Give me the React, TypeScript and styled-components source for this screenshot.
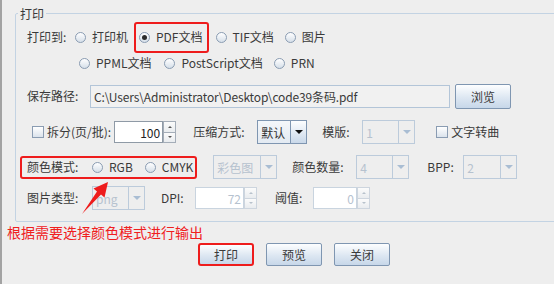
import * as React from 'react'
import styled, { createGlobalStyle, css } from 'styled-components'

const GlobalStyle = createGlobalStyle`
  html, body {
    margin: 0;
    padding: 0;
    background: #eeeeee;
    overflow: hidden;
  }
  body {
    font-family: "Noto Sans CJK SC", "Microsoft YaHei", sans-serif;
    font-size: 12px;
    color: #3a3a3a;
  }
`

const Page = styled.div`
  position: relative;
  width: 554px;
  height: 284px;
  box-sizing: border-box;
  border-left: 2px solid #a3a3a3;
  padding-top: 5px;
  overflow: hidden;
`

const Group = styled.fieldset`
  margin: 0 -20px 0 13px;
  padding: 2px 0 10px 11px;
  border: 1px solid #c3d3e3;
  border-radius: 2px;
  min-width: 0;
`

const Legend = styled.legend`
  margin-left: -9px;
  padding: 0 2px;
  line-height: 17px;
  font-size: 12px;
`

type RowProps = { $h: number; $mt?: number }
const Row = styled.div<RowProps>`
  display: flex;
  align-items: center;
  height: ${p => p.$h}px;
  margin-top: ${p => p.$mt ?? 0}px;
`

const Label = styled.span<{ $w?: number; $ml?: number }>`
  display: inline-block;
  white-space: nowrap;
  line-height: 16px;
  flex-shrink: 0;
  ${p => p.$w && `width: ${p.$w}px;`}
  margin-left: ${p => p.$ml ?? 0}px;
`

const Option = styled.label<{ $mr?: number; $ml?: number }>`
  display: inline-flex;
  align-items: center;
  gap: 6px;
  line-height: 16px;
  white-space: nowrap;
  margin-right: ${p => p.$mr ?? 0}px;
  margin-left: ${p => p.$ml ?? 0}px;
`

const RadioDot = styled.span<{ $checked?: boolean }>`
  position: relative;
  width: 11px;
  height: 11px;
  box-sizing: border-box;
  border-radius: 50%;
  border: 1px solid #8a9cb2;
  background: linear-gradient(#ffffff, #d6dfe9);
  flex-shrink: 0;
  ${p =>
    p.$checked &&
    css`
      &::after {
        content: '';
        position: absolute;
        left: 2px;
        top: 2px;
        width: 5px;
        height: 5px;
        border-radius: 50%;
        background: #2b2b2b;
      }
    `}
`

const CheckBox = styled.span`
  width: 12px;
  height: 12px;
  box-sizing: border-box;
  border: 1px solid #8a9cb2;
  background: linear-gradient(#ffffff, #dbe3ec);
  flex-shrink: 0;
`

const CheckOption = styled.label<{ $ml?: number }>`
  display: inline-flex;
  align-items: center;
  gap: 3px;
  white-space: nowrap;
  line-height: 16px;
  margin-left: ${p => p.$ml ?? 0}px;
`

const Highlight = styled.div<{ $inset: string }>`
  position: relative;
  display: flex;
  align-items: center;
  &::after {
    content: '';
    position: absolute;
    inset: ${p => p.$inset};
    border: 2px solid #ee1c1c;
    border-radius: 3px;
    pointer-events: none;
  }
`

const PathField = styled.div`
  width: 360px;
  height: 23px;
  box-sizing: border-box;
  border: 1px solid #b3c5d8;
  background: #f1f1f1;
  padding-left: 3px;
  display: flex;
  align-items: center;
  white-space: nowrap;
  overflow: hidden;
  letter-spacing: -0.15px;
`

const Button = styled.div<{ $w?: number; $h?: number; $ml?: number; $hl?: boolean }>`
  width: ${p => p.$w ?? 56}px;
  height: ${p => p.$h ?? 23}px;
  margin-left: ${p => p.$ml ?? 0}px;
  box-sizing: border-box;
  display: flex;
  align-items: center;
  justify-content: center;
  border: 1px solid #7f96b1;
  border-radius: 2px;
  background: linear-gradient(#fdfeff, #dde7f2 55%, #c7d7e9);
  flex-shrink: 0;
  ${p =>
    p.$hl &&
    css`
      border: 2px solid #ee1c1c;
      border-radius: 3px;
    `}
`

const Combo = styled.div<{ $w: number; $ml?: number }>`
  display: flex;
  width: ${p => p.$w}px;
  height: 24px;
  flex-shrink: 0;
  margin-left: ${p => p.$ml ?? 0}px;
`

const ComboText = styled.div<{ $disabled?: boolean }>`
  flex: 1;
  box-sizing: border-box;
  display: flex;
  align-items: center;
  padding-left: 3px;
  border: 1px solid ${p => (p.$disabled ? '#bccbdb' : '#7f96b1')};
  background: ${p => (p.$disabled ? '#eeeeee' : 'linear-gradient(#f4f7fa, #e3eaf2)')};
  color: ${p => (p.$disabled ? '#b6c2cf' : '#333')};
`

const ComboArrow = styled.div<{ $disabled?: boolean }>`
  width: 17px;
  box-sizing: border-box;
  margin-left: -1px;
  display: flex;
  align-items: center;
  justify-content: center;
  border: 1px solid ${p => (p.$disabled ? '#bccbdb' : '#7f96b1')};
  background: ${p => (p.$disabled ? '#eeeeee' : 'linear-gradient(#fdfeff, #c9d8e9)')};
  &::after {
    content: '';
    border-left: 4px solid transparent;
    border-right: 4px solid transparent;
    border-top: 4px solid ${p => (p.$disabled ? '#a9bdd3' : '#111')};
  }
`

const Spinner = styled.div<{ $w: number; $ml?: number }>`
  display: flex;
  width: ${p => p.$w}px;
  height: 22px;
  flex-shrink: 0;
  margin-left: ${p => p.$ml ?? 0}px;
`

const SpinField = styled.div<{ $disabled?: boolean }>`
  flex: 1;
  box-sizing: border-box;
  display: flex;
  align-items: center;
  justify-content: flex-end;
  padding-right: 2px;
  background: #ffffff;
  border: 1px solid ${p => (p.$disabled ? '#c9d4df' : '#8f9aa6')};
  color: ${p => (p.$disabled ? '#b6c2cf' : '#222')};
`

const SpinButtons = styled.div`
  width: 13px;
  display: flex;
  flex-direction: column;
`

const SpinBtn = styled.div<{ $up?: boolean; $disabled?: boolean }>`
  flex: 1;
  box-sizing: border-box;
  display: flex;
  align-items: center;
  justify-content: center;
  border: 1px solid ${p => (p.$disabled ? '#cdd5de' : '#a4adb8')};
  ${p => !p.$up && 'border-top: none;'}
  background: linear-gradient(#fbfbfb, #e9ecef);
  &::after {
    content: '';
    border-left: 2px solid transparent;
    border-right: 2px solid transparent;
    ${p =>
      p.$up
        ? `border-bottom: 2px solid ${p.$disabled ? '#b8c2cc' : '#555'};`
        : `border-top: 2px solid ${p.$disabled ? '#b8c2cc' : '#555'};`}
  }
`

const Note = styled.div`
  margin: 1px 0 0 5px;
  height: 18px;
  line-height: 18px;
  font-size: 14px;
  color: #f0201e;
  white-space: nowrap;
`

const ButtonBar = styled.div`
  display: flex;
  gap: 12px;
  padding-left: 196px;
  margin-top: 2px;
`

const ArrowLayer = styled.svg`
  position: absolute;
  left: -2px;
  top: 0;
  pointer-events: none;
`

type ComboProps = { value: string; w: number; ml?: number; disabled?: boolean }
function ComboBox({ value, w, ml, disabled }: ComboProps) {
  return (
    <Combo $w={w} $ml={ml}>
      <ComboText $disabled={disabled}>{value}</ComboText>
      <ComboArrow $disabled={disabled} />
    </Combo>
  )
}

type SpinProps = { value: string; w: number; ml?: number; disabled?: boolean }
function SpinBox({ value, w, ml, disabled }: SpinProps) {
  return (
    <Spinner $w={w} $ml={ml}>
      <SpinField $disabled={disabled}>{value}</SpinField>
      <SpinButtons>
        <SpinBtn $up $disabled={disabled} />
        <SpinBtn $disabled={disabled} />
      </SpinButtons>
    </Spinner>
  )
}

function Radio({ text, checked, mr, ml }: { text: string; checked?: boolean; mr?: number; ml?: number }) {
  return (
    <Option $mr={mr} $ml={ml}>
      <RadioDot $checked={checked} />
      {text}
    </Option>
  )
}

export default function App() {
  return (
    <>
      <GlobalStyle />
      <Page>
        <Group>
          <Legend>打印</Legend>
          <Row $h={26}>
            <Label $w={48}>打印到:</Label>
            <Radio text="打印机" mr={11} />
            <Highlight $inset="-7px -6px -8px -5px">
              <Radio text="PDF文档" checked />
            </Highlight>
            <Radio text="TIF文档" ml={13} mr={11} />
            <Radio text="图片" />
          </Row>
          <Row $h={26}>
            <Radio text="PPML文档" ml={52} mr={13} />
            <Radio text="PostScript文档" mr={11} />
            <Radio text="PRN" />
          </Row>
          <Row $h={32} $mt={4}>
            <Label $w={63}>保存路径:</Label>
            <PathField>C:\Users\Administrator\Desktop\code39条码.pdf</PathField>
            <Button $w={56} $h={25} $ml={5}>浏览</Button>
          </Row>
          <Row $h={28} $mt={6}>
            <CheckOption $ml={5}>
              <CheckBox />
              拆分(页/批):
            </CheckOption>
            <SpinBox value="100" w={62} ml={3} />
            <Label $w={64} $ml={17}>压缩方式:</Label>
            <ComboBox value="默认" w={50} />
            <Label $w={40} $ml={15}>模版:</Label>
            <ComboBox value="1" w={53} disabled />
            <CheckOption $ml={21}>
              <CheckBox />
              文字转曲
            </CheckOption>
          </Row>
          <Row $h={26} $mt={8}>
            <Highlight $inset="-3px -4px -4px -7px">
              <Label $w={65}>颜色模式:</Label>
              <Radio text="RGB" mr={12} />
              <Radio text="CMYK" />
            </Highlight>
            <ComboBox value="彩色图" w={64} ml={20} disabled />
            <Label $w={64} $ml={15}>颜色数量:</Label>
            <ComboBox value="4" w={53} disabled />
            <Label $w={36} $ml={18}>BPP:</Label>
            <ComboBox value="2" w={54} disabled />
          </Row>
          <Row $h={26} $mt={5}>
            <Label $w={65}>图片类型:</Label>
            <ComboBox value="png" w={53} disabled />
            <Label $w={34} $ml={16}>DPI:</Label>
            <SpinBox value="72" w={62} disabled />
            <Label $w={38} $ml={18}>阈值:</Label>
            <SpinBox value="0" w={57} disabled />
          </Row>
        </Group>
        <Note>根据需要选择颜色模式进行输出</Note>
        <ButtonBar>
          <Button $hl>打印</Button>
          <Button>预览</Button>
          <Button>关闭</Button>
        </ButtonBar>
        <ArrowLayer width={554} height={284} viewBox="0 0 554 284">
          <polygon
            points="82,214 97,191.5 93.5,188.5 108,182 104.5,197.5 101,194.5"
            fill="#ee1c1c"
          />
        </ArrowLayer>
      </Page>
    </>
  )
}
